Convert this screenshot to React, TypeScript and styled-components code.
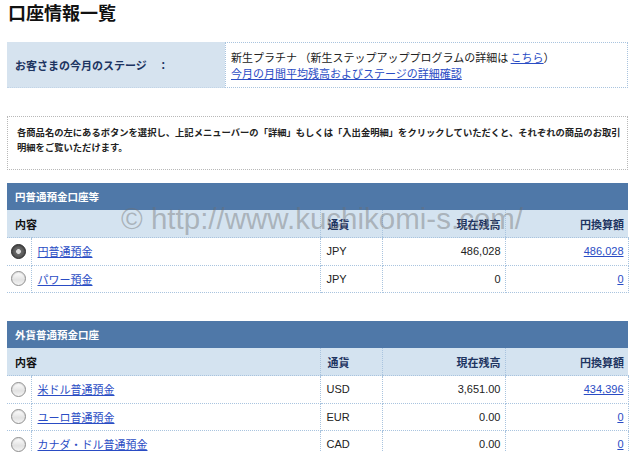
import React from "react";
import styled, { createGlobalStyle } from "styled-components";

const Global = createGlobalStyle`
  html, body { margin: 0; padding: 0; background: #fff; }
  body {
    font-family: "Liberation Sans", "Noto Sans CJK JP", sans-serif;
    color: #222;
  }
`;

const Page = styled.div`
  position: relative;
  padding: 0 7px;
  width: 621px;
  overflow: hidden;
  height: 452px;
`;

const Title = styled.h1`
  margin: 0;
  padding: 0 0 0 1px;
  font-size: 18px;
  line-height: 24px;
  font-weight: bold;
  color: #111;
  font-family: "Noto Sans CJK JP", sans-serif;
`;

const StageBox = styled.div`
  margin-top: 18px;
  display: grid;
  grid-template-columns: 218px 1fr;
  height: 46px;
`;

const StageLabel = styled.div`
  background: #d6e3ef;
  display: flex;
  align-items: center;
  padding-left: 8px;
  font-size: 11px;
  font-weight: bold;
  color: #1d3461;
  font-family: "Noto Sans CJK JP", sans-serif;
  border-bottom: 1px dotted #c2d5e8;
`;

const StageValue = styled.div`
  border: 1px dotted #a9c4df;
  padding: 6px 0 0 5px;
  font-size: 11px;
  line-height: 16px;
  color: #222;
  font-family: "Noto Sans CJK JP", sans-serif;
`;

const Link = styled.a`
  color: #2a4cc4;
  text-decoration: underline;
  cursor: pointer;
`;

const Notice = styled.div`
  margin-top: 28px;
  border: 1px dotted #b8b8b8;
  padding: 8px 9px 14px;
  font-size: 9.3px;
  line-height: 15px;
  font-weight: bold;
  color: #222;
  white-space: nowrap;
  font-family: "Noto Sans CJK JP", sans-serif;
`;

const Section = styled.section<{ $gap: number }>`
  margin-top: ${(p) => p.$gap}px;
`;

const SectionHead = styled.div`
  background: #4f78a8;
  color: #fff;
  height: 27px;
  display: flex;
  align-items: center;
  padding-left: 8px;
  font-size: 10.5px;
  font-weight: bold;
  font-family: "Noto Sans CJK JP", sans-serif;
`;

const Table = styled.table`
  width: 100%;
  border-collapse: collapse;
  table-layout: fixed;
  font-size: 11px;
`;

const HeadCell = styled.th<{ $align?: string }>`
  background: #d4e3f0;
  height: 27px;
  padding: 0 4px 0 7px;
  text-align: ${(p) => p.$align || "left"};
  font-weight: bold;
  font-size: 11px;
  color: #1d3461;
  font-family: "Noto Sans CJK JP", sans-serif;
  border-left: 1px dotted #a9c4df;
  border-bottom: 1px dotted #a9c4df;
  &:first-child { border-left: none; padding-left: 8px; color: #111; }
`;

const Cell = styled.td<{ $align?: string }>`
  height: 26.5px;
  padding: 0 4px 0 6px;
  text-align: ${(p) => p.$align || "left"};
  border: 1px dotted #a9c4df;
  border-top: none;
  color: #222;
  &:first-child { border-left: none; padding: 0; text-align: center; }
`;

const NameLink = styled(Link)`
  font-family: "Noto Sans CJK JP", sans-serif;
  font-size: 11px;
`;

const Radio = styled.span<{ $on?: boolean }>`
  display: inline-block;
  width: 15px;
  height: 15px;
  border-radius: 50%;
  box-sizing: border-box;
  vertical-align: middle;
  border: 1px solid ${(p) => (p.$on ? "#2e2e2e" : "#8e8e8e")};
  background: ${(p) =>
    p.$on
      ? "radial-gradient(circle at 50% 50%, #dcdcdc 0 2px, #6a6a6a 2.8px, #3a3a3a 100%)"
      : "linear-gradient(#ffffff, #e2e2e2 60%, #f4f4f4)"};
  box-shadow: inset 0 1px 1px rgba(0,0,0,0.12);
`;

const Watermark = styled.div`
  position: absolute;
  left: 121px;
  top: 202px;
  font-size: 29.5px;
  font-family: "Liberation Sans", sans-serif;
  color: rgba(110, 110, 110, 0.42);
  white-space: nowrap;
  pointer-events: none;
`;

type Row = { name: string; cur: string; bal: string; yen: string; on?: boolean };

const Cols = () => (
  <colgroup>
    <col style={{ width: 24 }} />
    <col style={{ width: 289 }} />
    <col style={{ width: 62 }} />
    <col style={{ width: 123 }} />
    <col style={{ width: 123 }} />
  </colgroup>
);

const AccountTable = ({ title, rows, gap }: { title: string; rows: Row[]; gap: number }) => (
  <Section $gap={gap}>
    <SectionHead>{title}</SectionHead>
    <Table>
      <Cols />
      <thead>
        <tr>
          <HeadCell colSpan={2}>内容</HeadCell>
          <HeadCell>通貨</HeadCell>
          <HeadCell $align="right">現在残高</HeadCell>
          <HeadCell $align="right">円換算額</HeadCell>
        </tr>
      </thead>
      <tbody>
        {rows.map((r) => (
          <tr key={r.name}>
            <Cell>
              <Radio $on={r.on} />
            </Cell>
            <Cell>
              <NameLink>{r.name}</NameLink>
            </Cell>
            <Cell>{r.cur}</Cell>
            <Cell $align="right">{r.bal}</Cell>
            <Cell $align="right">
              <Link>{r.yen}</Link>
            </Cell>
          </tr>
        ))}
      </tbody>
    </Table>
  </Section>
);

export default function App() {
  return (
    <Page>
      <Global />
      <Title>口座情報一覧</Title>
      <StageBox>
        <StageLabel>お客さまの今月のステージ　：</StageLabel>
        <StageValue>
          新生プラチナ （新生ステップアッププログラムの詳細は <Link>こちら</Link>）
          <br />
          <Link>今月の月間平均残高およびステージの詳細確認</Link>
        </StageValue>
      </StageBox>
      <Notice>
        各商品名の左にあるボタンを選択し、上記メニューバーの「詳細」もしくは「入出金明細」をクリックしていただくと、それぞれの商品のお取引
        <br />
        明細をご覧いただけます。
      </Notice>
      <AccountTable
        gap={13}
        title="円普通預金口座等"
        rows={[
          { name: "円普通預金", cur: "JPY", bal: "486,028", yen: "486,028", on: true },
          { name: "パワー預金", cur: "JPY", bal: "0", yen: "0" },
        ]}
      />
      <AccountTable
        gap={28}
        title="外貨普通預金口座"
        rows={[
          { name: "米ドル普通預金", cur: "USD", bal: "3,651.00", yen: "434,396" },
          { name: "ユーロ普通預金", cur: "EUR", bal: "0.00", yen: "0" },
          { name: "カナダ・ドル普通預金", cur: "CAD", bal: "0.00", yen: "0" },
        ]}
      />
      <Watermark>© http://www.kuchikomi-s.com/</Watermark>
    </Page>
  );
}
